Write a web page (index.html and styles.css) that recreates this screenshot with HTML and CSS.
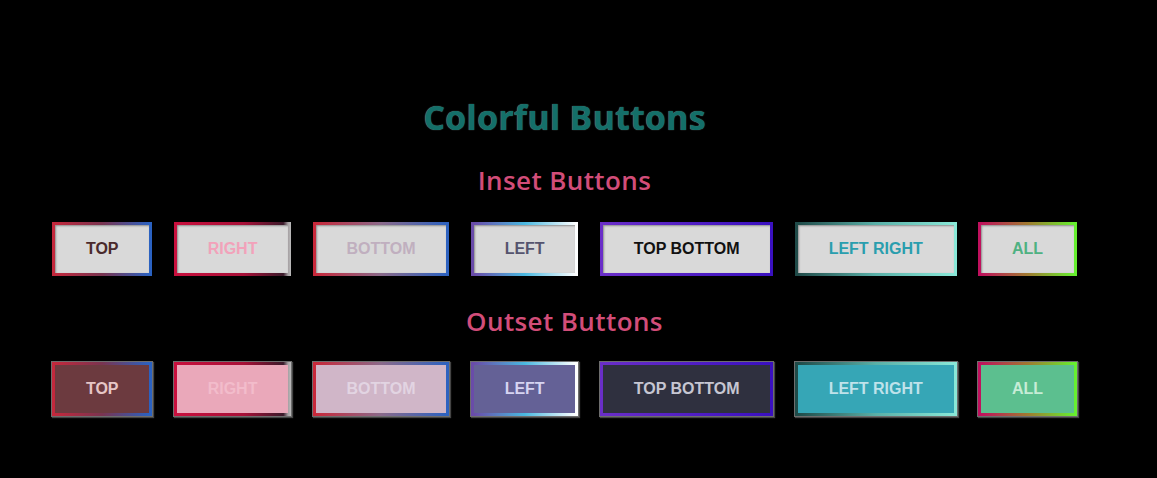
FILE: index.html
```html
<!DOCTYPE html>
<html lang="en">
<head>
<meta charset="utf-8">
<title>Colorful Buttons</title>
<link rel="stylesheet" href="styles.css">
</head>
<body>
<main class="page">
  <h1 class="title">Colorful Buttons</h1>
  <h2 class="subtitle">Inset Buttons</h2>
  <div class="row inset">
    <button class="btn b-top">TOP</button>
    <button class="btn b-right">RIGHT</button>
    <button class="btn b-bottom">BOTTOM</button>
    <button class="btn b-left">LEFT</button>
    <button class="btn b-tb">TOP BOTTOM</button>
    <button class="btn b-lr">LEFT RIGHT</button>
    <button class="btn b-all">ALL</button>
  </div>
  <h2 class="subtitle">Outset Buttons</h2>
  <div class="row outset">
    <button class="btn b-top">TOP</button>
    <button class="btn b-right">RIGHT</button>
    <button class="btn b-bottom">BOTTOM</button>
    <button class="btn b-left">LEFT</button>
    <button class="btn b-tb">TOP BOTTOM</button>
    <button class="btn b-lr">LEFT RIGHT</button>
    <button class="btn b-all">ALL</button>
  </div>
</main>
</body>
</html>
```

FILE: styles.css
```css
html, body {
  margin: 0;
  padding: 0;
  background: #000;
}
body {
  width: 1157px;
  height: 478px;
  overflow: hidden;
}
.page {
  width: 1129px;
  display: flex;
  flex-direction: column;
  align-items: center;
  padding-top: 97px;
}
.title {
  margin: 0;
  font-family: "Open Sans", "DejaVu Sans", sans-serif;
  font-weight: 700;
  font-size: 34px;
  line-height: 40px;
  letter-spacing: 0.2px;
  color: #146f69;
  text-shadow: 0 0 1px rgba(170, 210, 200, 0.7);
}
.subtitle {
  margin: 27px 0 0;
  font-family: "Open Sans", "DejaVu Sans", sans-serif;
  font-weight: 600;
  font-size: 26px;
  line-height: 32px;
  color: #d24d79;
  letter-spacing: 0.4px;
}
.row {
  display: flex;
  gap: 21.5px;
  margin-top: 26px;
}
.row.outset {
  margin-top: 25px;
}
.row.inset + .subtitle {
  margin-top: 29px;
}
.btn {
  font-family: "Liberation Sans", Arial, sans-serif;
  font-weight: 700;
  font-size: 16px;
  line-height: 18px;
  padding: 14.5px 30.8px 15.5px;
  border: 3px solid;
  background: #d9d9d9;
  cursor: pointer;
  white-space: nowrap;
}
.inset .btn {
  box-shadow: inset 1px 1px 2px rgba(0, 0, 0, 0.35);
}
.outset .btn {
  box-shadow: 0 0 0 1px #6d6d6d, 1px 1px 1px 1px #444;
}

/* border gradients */
.b-top    { border-image: linear-gradient(to right, #c4283c, #7a3450 50%, #2a62c2) 1; }
.b-right  { border-image: linear-gradient(to right, #c8103e, #a81038 60%, #3a1a2a 95%, #bbb) 1; }
.b-bottom { border-image: linear-gradient(to right, #c8283a, #8a6a8a 50%, #2d62c0) 1; }
.b-left   { border-image: linear-gradient(to right, #6a4aa8, #4ab8e0 50%, #ffffff) 1; }
.b-tb     { border-image: linear-gradient(to right, #6a2ec8, #3a10c0) 1; }
.b-lr     { border-image: linear-gradient(to right, #1f4a48, #5ab0a8 50%, #8ae8d8) 1; }
.b-all    { border-image: linear-gradient(to right, #c0105e, #a07a30 50%, #66f030) 1; }

/* inset text colours */
.inset .b-top    { color: #4a2a2c; }
.inset .b-right  { color: #f2a2ba; }
.inset .b-bottom { color: #c0afbf; }
.inset .b-left   { color: #55546e; }
.inset .b-tb     { color: #111111; }
.inset .b-lr     { color: #2a9eae; }
.inset .b-all    { color: #4fb182; }

/* outset backgrounds and text */
.outset .b-top    { background: #6c3a3f; color: #e6c6c6; }
.outset .b-right  { background: #eaa8ba; color: #f2bccb; }
.outset .b-bottom { background: #d0b6c8; color: #e2d4e2; }
.outset .b-left   { background: #646196; color: #d6d4f2; }
.outset .b-tb     { background: #2f303f; color: #c6c6d2; }
.outset .b-lr     { background: #36a6b6; color: #bfe2ea; }
.outset .b-all    { background: #5cbf8f; color: #c6ecd6; }
```
